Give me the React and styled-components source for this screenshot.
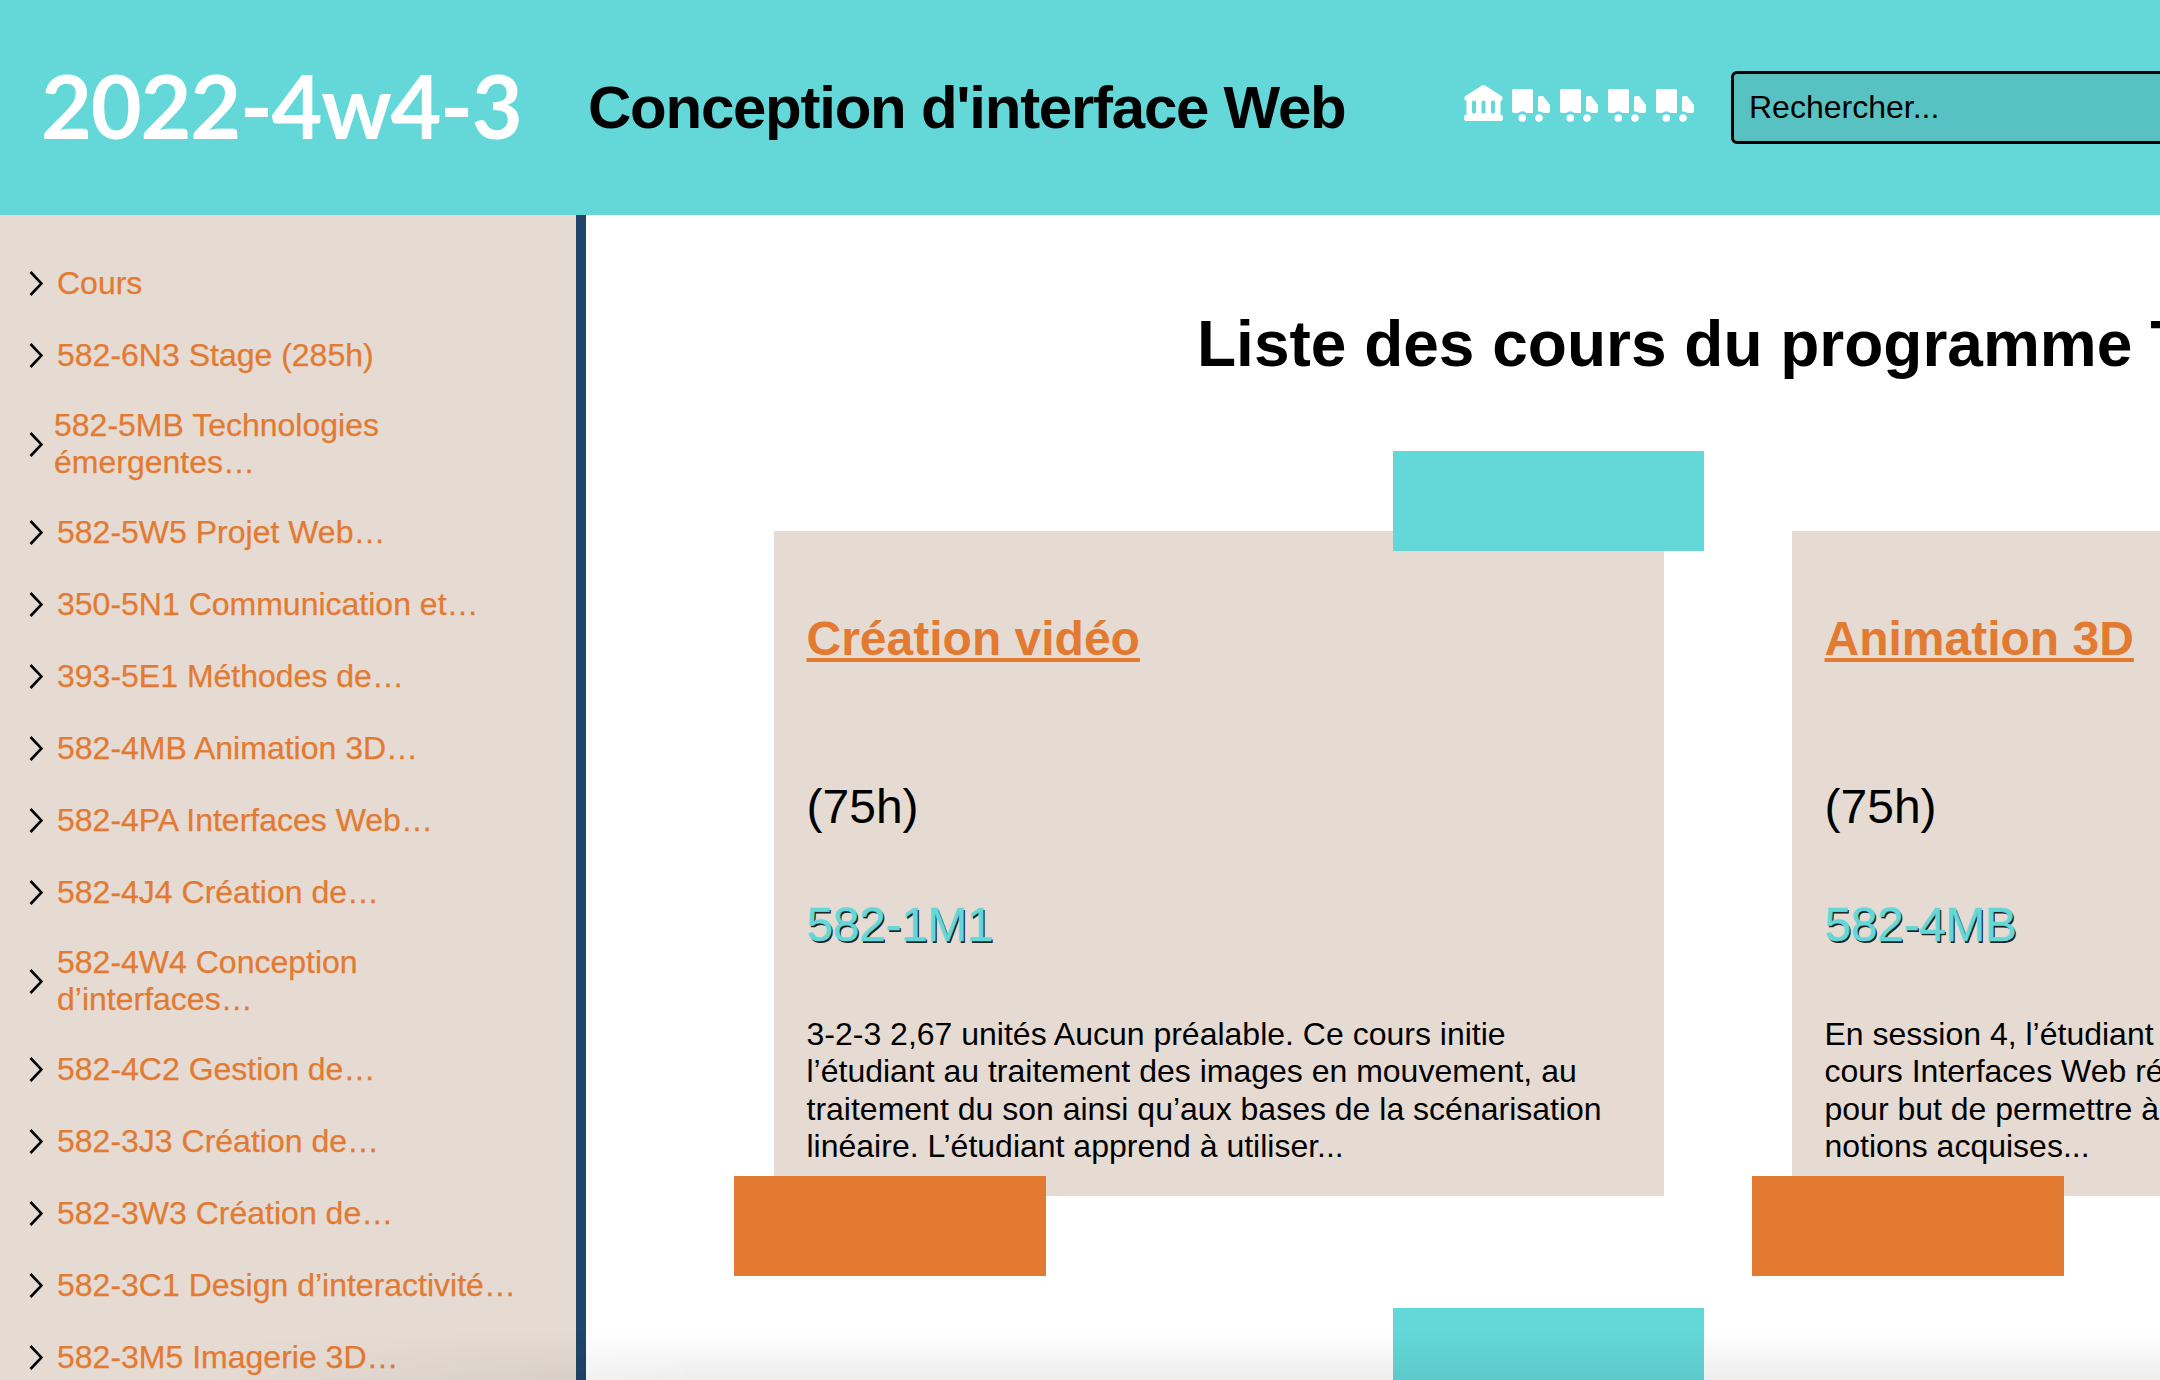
import React from "react";
import styled, { createGlobalStyle } from "styled-components";

const Global = createGlobalStyle`
  html, body {
    margin: 0;
    height: 100%;
    overflow: hidden;
    background: #fff;
  }
  body {
    font-family: "Liberation Sans", Arial, sans-serif;
    color: #000;
  }
`;

const Page = styled.div`
  width: 2160px;
  height: 1380px;
  overflow: hidden;
  position: relative;
  display: flex;
  flex-direction: column;
`;

const Header = styled.header`
  flex: none;
  height: 215px;
  background-color: #64d8d9;
  display: flex;
  align-items: center;
  padding-left: 41px;
  box-sizing: border-box;
`;

const SiteTitle = styled.div`
  width: 547px;
  flex: none;
  padding-bottom: 5px;
  font-family: "Lato", sans-serif;
  font-size: 88px;
  font-weight: 700;
  letter-spacing: -1.3px;
  color: #fff;
`;

const Tagline = styled.div`
  width: 876px;
  flex: none;
  font-size: 60px;
  font-weight: 700;
  letter-spacing: -1.25px;
`;

const Icons = styled.div`
  width: 267px;
  flex: none;
  display: flex;
  gap: 9px;
  align-items: flex-end;
  padding-bottom: 7px;
`;

const Search = styled.input`
  flex: none;
  width: 700px;
  height: 73px;
  box-sizing: border-box;
  border: 3px solid #000;
  border-radius: 6px;
  background-color: #58c1c1;
  font-family: inherit;
  font-size: 32px;
  padding: 0 15px;
  outline: none;
  &::placeholder {
    color: #000;
    opacity: 1;
  }
`;

const Body = styled.div`
  flex: 1;
  display: flex;
  min-height: 0;
`;

const Sidebar = styled.nav`
  flex: none;
  box-sizing: border-box;
  width: 586px;
  border-right: 10px solid #20446a;
  background-color: #e5dbd3;
  padding: 50px 0 0 28px;
  display: flex;
  flex-direction: column;
  gap: 35px;
`;

const NavItem = styled.a`
  display: flex;
  align-items: center;
  gap: ${(p) => (p.$tight ? "11px" : "14px")};
  margin: ${(p) => (p.$wrapped ? "-2px 0" : "0")};
  width: 500px;
  font-size: 32px;
  line-height: 37px;
  color: #e37a31;
  -webkit-text-stroke: 0.25px #e37a31;
`;

const Main = styled.main`
  flex: 1;
  min-width: 0;
  padding: 92px 0 0 188px;
`;

const PageTitle = styled.h1`
  margin: 0 0 0 423px;
  font-size: 64px;
  line-height: 74px;
  white-space: nowrap;
`;

const Grid = styled.div`
  display: grid;
  grid-template-columns: 890px 890px;
  column-gap: 128px;
  row-gap: 192px;
  margin-top: 150px;
`;

const Card = styled.article`
  position: relative;
  box-sizing: border-box;
  height: 665px;
  padding: 80px 32.5px 0;
  background-color: #e5dbd3;
  &::before {
    content: "";
    position: absolute;
    top: -80px;
    right: -40px;
    width: 311px;
    height: 100px;
    background-color: #64d8d9;
  }
  &::after {
    content: "";
    position: absolute;
    bottom: -80px;
    left: -40px;
    width: 312px;
    height: 100px;
    background-color: #e37a31;
  }
`;

const CardTitle = styled.a`
  display: block;
  font-size: 48px;
  line-height: 55px;
  font-weight: 700;
  color: #e37a31;
  text-decoration: underline;
`;

const Hours = styled.div`
  margin-top: 113px;
  font-size: 48px;
  line-height: 55px;
`;

const Code = styled.div`
  margin-top: 63px;
  font-size: 48px;
  line-height: 55px;
  letter-spacing: -0.4px;
  color: #64d8d9;
  -webkit-text-stroke: 0.6px #64d8d9;
  text-shadow: 1.5px 1.5px 0 #222;
`;

const Summary = styled.p`
  margin: 64px 0 0;
  font-size: 32px;
  line-height: 37.3px;
`;

const Shade = styled.div`
  position: absolute;
  left: 0;
  right: 0;
  bottom: 0;
  height: 48px;
  background: linear-gradient(to bottom, rgba(0, 0, 0, 0), rgba(0, 0, 0, 0.07));
  mask-image: linear-gradient(to right, transparent 200px, #000 700px);
  pointer-events: none;
`;

const BankSvg = styled.svg`
  margin-bottom: 2px;
`;

const Bank = () => (
  <BankSvg width="39" height="36" viewBox="0 0 39 36" fill="#fff">
    <path
      fillRule="evenodd"
      d="M18 .6 Q19.5 -.3 21 .6 L37.5 11 Q39 12 38.5 14 Q38 16 36.5 16 V30 H38 Q39 30 39 33 Q39 36 37 36 H2 Q0 36 0 33 Q0 30 1 30 H2.5 V16 Q1 16 .5 14 Q0 12 1.5 11 Z M8 17 V27 Q8 28.5 10 28.5 Q12 28.5 12 27 V17 Q12 15.5 10 15.5 Q8 15.5 8 17 Z M17.5 17 V27 Q17.5 28.5 19.5 28.5 Q21.5 28.5 21.5 27 V17 Q21.5 15.5 19.5 15.5 Q17.5 15.5 17.5 17 Z M27 17 V27 Q27 28.5 29 28.5 Q31 28.5 31 27 V17 Q31 15.5 29 15.5 Q27 15.5 27 17 Z"
    />
  </BankSvg>
);

const Truck = () => (
  <svg width="39" height="34" viewBox="0 0 39 34" fill="#fff">
    <path d="M2 0 H19 Q21 0 21 2 V24 H14.4 A6.5 6.5 0 0 0 6.2 24 H2 Q0 24 0 22 V2 Q0 0 2 0 Z" />
    <path d="M26 9 Q26 7 28 7 H31 L38 16 V22 Q38 24 36 24 H31.1 A6.5 6.5 0 0 0 26 22.6 Z" />
    <circle cx="10.3" cy="29" r="3.8" />
    <circle cx="27" cy="29" r="3.8" />
  </svg>
);

const ChevronSvg = styled.svg`
  flex: none;
`;

const Chevron = () => (
  <ChevronSvg width="15" height="25" viewBox="0 0 15 25" fill="none" stroke="#000" strokeWidth="2.6">
    <path d="M2.5 1 L13.5 12.5 L2.5 24" />
  </ChevronSvg>
);

const navItems = [
  { label: "Cours" },
  { label: "582-6N3 Stage (285h)" },
  { label: "582-5MB Technologies émergentes…", tight: true, wrapped: true },
  { label: "582-5W5 Projet Web…" },
  { label: "350-5N1 Communication et…" },
  { label: "393-5E1 Méthodes de…" },
  { label: "582-4MB Animation 3D…" },
  { label: "582-4PA Interfaces Web…" },
  { label: "582-4J4 Création de…" },
  { label: "582-4W4 Conception d’interfaces…", wrapped: true },
  { label: "582-4C2 Gestion de…" },
  { label: "582-3J3 Création de…" },
  { label: "582-3W3 Création de…" },
  { label: "582-3C1 Design d’interactivité…" },
  { label: "582-3M5 Imagerie 3D…" },
];

const cards = [
  {
    title: "Création vidéo",
    code: "582-1M1",
    text: "3-2-3 2,67 unités Aucun préalable. Ce cours initie l’étudiant au traitement des images en mouvement, au traitement du son ainsi qu’aux bases de la scénarisation linéaire. L’étudiant apprend à utiliser...",
  },
  {
    title: "Animation 3D",
    code: "582-4MB",
    text: (
      <>
        En session 4, l’étudiant complète les
        <br />
        cours Interfaces Web réalisés
        <br />
        pour but de permettre à l’étudiant
        <br />
        notions acquises...
      </>
    ),
  },
  { title: "", code: "", text: "" },
  { title: "", code: "", text: "" },
];

export default function App() {
  return (
    <Page>
      <Global />
      <Header>
        <SiteTitle>2022-4w4-3</SiteTitle>
        <Tagline>Conception d'interface Web</Tagline>
        <Icons>
          <Bank />
          <Truck />
          <Truck />
          <Truck />
          <Truck />
        </Icons>
        <Search placeholder="Rechercher..." />
      </Header>
      <Body>
        <Sidebar>
          {navItems.map((item) => (
            <NavItem key={item.label} $tight={item.tight} $wrapped={item.wrapped}>
              <Chevron />
              <span>{item.label}</span>
            </NavItem>
          ))}
        </Sidebar>
        <Main>
          <PageTitle>Liste des cours du programme TIM</PageTitle>
          <Grid>
            {cards.map((card, i) => (
              <Card key={i}>
                <CardTitle>{card.title}</CardTitle>
                {card.code && <Hours>(75h)</Hours>}
                <Code>{card.code}</Code>
                <Summary>{card.text}</Summary>
              </Card>
            ))}
          </Grid>
        </Main>
      </Body>
      <Shade />
    </Page>
  );
}
